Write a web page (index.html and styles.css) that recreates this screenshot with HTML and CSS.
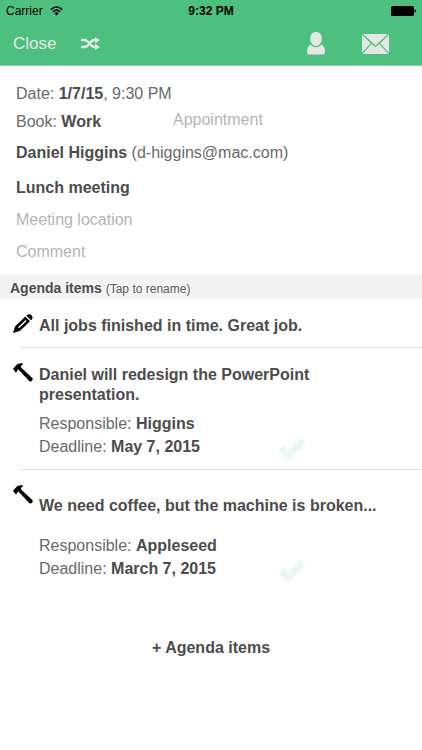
FILE: index.html
```html
<!DOCTYPE html>
<html lang="en">
<head>
<meta charset="utf-8">
<meta name="viewport" content="width=device-width, initial-scale=1">
<title>Meeting</title>
<link rel="stylesheet" href="styles.css">
</head>
<body>
<svg class="defs" aria-hidden="true">
  <symbol id="hammer" viewBox="0 0 20 20">
    <path d="M0 5.8 L3.2 2.2 C5 .6 7.5 -.3 10.4 .8 L8.4 2.4 7.8 4 8.8 5.2 19.4 15 Q20.2 16.2 19 17.8 Q17.6 19.2 16.2 18 L6.6 7.8 5.4 6.4 4.6 6.6 4.4 8 2.8 9.4Z"/>
  </symbol>
  <symbol id="check" viewBox="0 0 28 24">
    <path d="M.2 13.6 L5.5 8.4 10.6 13 23 .8 27.8 5.8 10.4 23Z"/>
  </symbol>
</svg>
<header class="header">
  <div class="status">
    <div class="carrier">
      <span>Carrier</span>
      <svg class="wifi" viewBox="0 0 13 10" aria-hidden="true">
        <path d="M.8 3.6 Q6.5 -1.7 12.2 3.6 M2.9 5.8 Q6.5 2.4 10.1 5.8" fill="none" stroke="currentColor" stroke-width="1.5"/>
        <path d="M4.2 7.2 Q6.5 5.3 8.8 7.2 L6.5 9.6Z"/>
      </svg>
    </div>
    <span class="time">9:32 PM</span>
    <svg class="battery" viewBox="0 0 25 10" aria-hidden="true">
      <rect width="23" height="10" rx="1.5"/><path d="M23.6 3.2 Q25 3.4 25 5 Q25 6.6 23.6 6.8Z"/>
    </svg>
  </div>
  <nav class="nav">
    <button class="close" type="button">Close</button>
    <button class="shuffle" type="button" aria-label="Shuffle">
      <svg viewBox="0 0 19 13" aria-hidden="true">
        <path d="M0 3 H3.5 C8.5 3 8.5 10 13.5 10 H15 M0 10 H3.5 C8.5 10 8.5 3 13.5 3 H15" fill="none" stroke="currentColor" stroke-width="2.3"/>
        <path d="M14 0 L19 3 14 6.2Z M14 6.8 L19 10 14 13Z"/>
      </svg>
    </button>
    <button class="person" type="button" aria-label="Participants">
      <svg viewBox="0 0 18 23" aria-hidden="true">
        <path d="M9 0 C12.8 0 14.8 2.8 14.8 6.5 C14.8 10.5 12 14 9 14 S3.2 10.5 3.2 6.5 C3.2 2.8 5.2 0 9 0Z"/>
        <path d="M3.5 12.4 C5 14.2 6.8 15.2 9 15.2 S13 14.2 14.5 12.4 C16.8 13.3 18 16 18 20 Q18 22.6 15.4 22.6 H2.6 Q0 22.6 0 20 C0 16 1.2 13.3 3.5 12.4Z"/>
      </svg>
    </button>
    <button class="mail" type="button" aria-label="Send by mail">
      <svg viewBox="0 0 27 20" aria-hidden="true">
        <path d="M1 0 H26 L13.5 11.4Z M0 .8 L8.8 9.2 0 18.8Z M27 .8 V18.8 L18.2 9.2Z M9.6 9.9 L13.5 13.2 17.4 9.9 26.4 20 H.6Z"/>
      </svg>
    </button>
  </nav>
</header>
<main>
  <section class="details">
    <p>Date: <b>1/7/15</b>, 9:30 PM</p>
    <div class="book">
      <p>Book: <b>Work</b></p>
      <input class="field" type="text" placeholder="Appointment" aria-label="Appointment">
    </div>
    <p><b>Daniel Higgins</b> (d-higgins@mac.com)</p>
    <input class="field title" type="text" value="Lunch meeting" aria-label="Title">
    <input class="field" type="text" placeholder="Meeting location" aria-label="Meeting location">
    <input class="field" type="text" placeholder="Comment" aria-label="Comment">
  </section>
  <h2 class="section"><b>Agenda items</b> <small>(Tap to rename)</small></h2>
  <ul class="agenda">
    <li class="item">
      <svg class="icon" viewBox="0 0 20 20" aria-hidden="true">
        <path fill-rule="evenodd" d="M0 19 L2 12.4 12.4 2.6 17 7.2 6.8 17Z M5 13.2 L12.5 6 13.6 7.1 6 14.3Z"/>
        <path d="M13.4 1.7 Q16 -.9 18.6 1.2 Q20.7 3.8 18 6.3Z"/>
      </svg>
      <h3>All jobs finished in time. Great job.</h3>
    </li>
    <li class="item">
      <svg class="icon" aria-hidden="true"><use href="#hammer"/></svg>
      <div class="body">
        <h3>Daniel will redesign the PowerPoint presentation.</h3>
        <div class="meta">
          <p>Responsible: <b>Higgins</b><br>Deadline: <b>May 7, 2015</b></p>
          <button class="done" type="button" aria-label="Mark as done"><svg aria-hidden="true"><use href="#check"/></svg></button>
        </div>
      </div>
    </li>
    <li class="item">
      <svg class="icon" aria-hidden="true"><use href="#hammer"/></svg>
      <div class="body roomy">
        <h3>We need coffee, but the machine is broken...</h3>
        <div class="meta">
          <p>Responsible: <b>Appleseed</b><br>Deadline: <b>March 7, 2015</b></p>
          <button class="done" type="button" aria-label="Mark as done"><svg aria-hidden="true"><use href="#check"/></svg></button>
        </div>
      </div>
    </li>
  </ul>
  <button class="add" type="button">+ Agenda items</button>
</main>
</body>
</html>
```
FILE: styles.css
```css
* { box-sizing: border-box; }
body {
  margin: 0;
  background: #fff;
  color: #6a6a6a;
  font: 16px/20px "Liberation Sans", Arial, sans-serif;
}
p, h2, h3, ul { margin: 0; padding: 0; }
b, h3 { color: #4c4c4c; font-weight: bold; }
button { padding: 0; border: 0; background: none; color: inherit; font: inherit; }
svg { display: block; fill: currentColor; }
.defs { position: absolute; width: 0; height: 0; }

.header { background: #4dbf7e; border-bottom: 1px solid #8fcfaa; }
.status {
  display: grid;
  grid-template-columns: 1fr auto 1fr;
  align-items: center;
  height: 22px;
  padding: 0 6px;
  color: #000;
  font-size: 12px;
}
.carrier { display: flex; align-items: center; gap: 7px; }
.wifi { width: 13px; height: 10px; }
.time { font-weight: bold; }
.battery { width: 25px; height: 10px; justify-self: end; }
.nav {
  display: flex;
  align-items: center;
  height: 43px;
  padding: 0 33px 0 13px;
  color: #e4e8e5;
}
.close { font-size: 17px; }
.shuffle { margin-left: 25px; }
.shuffle svg { width: 19px; height: 13px; }
.person { margin-left: auto; }
.person svg { width: 18px; height: 23px; }
.mail { margin-left: 37px; }
.mail svg { width: 27px; height: 20px; }

.details {
  display: flex;
  flex-direction: column;
  gap: 12px;
  padding: 18px 16px 12px;
}
.details > p:first-child { margin-bottom: -4px; }
.book { display: flex; align-items: center; }
.book p { width: 157px; }
.book .field { flex: 1; min-width: 0; margin-top: -4px; }
.details .book + p { margin-top: -1px; }
.field {
  height: 20px;
  padding: 0;
  border: 0;
  background: none;
  color: #4c4c4c;
  font: inherit;
}
.field::placeholder { color: #b5b5b5; opacity: 1; }
.title { margin-top: 3px; font-weight: bold; }

.section {
  padding: 4px 10px 1px;
  background: #f4f4f4;
  font-size: 14px;
  font-weight: normal;
  line-height: 20px;
}
.section small { color: #5c5c5c; font-size: 12px; line-height: 16px; }

.agenda { margin-left: 20px; list-style: none; }
.item { display: flex; padding: 17px 16px 11px 0; }
.item + .item { border-top: 1px solid #e0e0e0; }
.icon {
  flex: none;
  width: 20px;
  height: 20px;
  margin: -2px 6px 0 -7px;
  color: #000;
}
.item h3 { font-size: 16px; line-height: 20px; }
.body { flex: 1; }
.body h3 { max-width: 300px; }
.meta { position: relative; margin-top: 7px; }
.meta p { line-height: 23px; }
.done {
  position: absolute;
  left: 239px;
  bottom: -3px;
  color: #ebf7f1;
}
.done svg { width: 28px; height: 24px; }
.roomy h3 { max-width: none; margin-top: 9px; }
.roomy .meta { margin-top: 18px; }
.add {
  display: block;
  margin: 47px auto 0;
  color: #4c4c4c;
  font-weight: bold;
}
```
